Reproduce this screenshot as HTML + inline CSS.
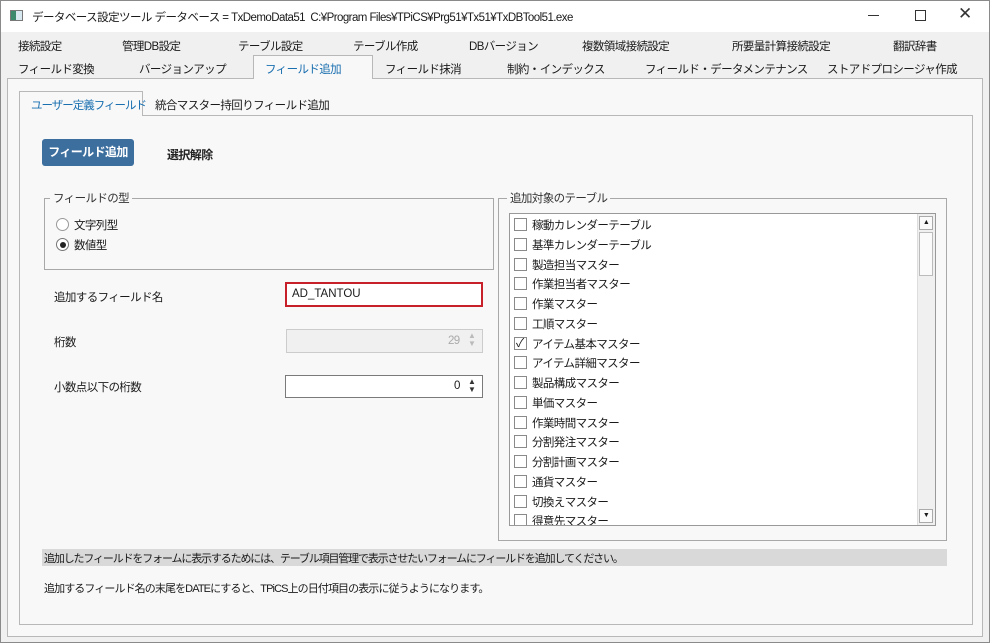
<!DOCTYPE html>
<html><head><meta charset="utf-8"><style>
*{box-sizing:border-box;margin:0;padding:0}
body{width:990px;height:643px;background:#f0f0f0;font-family:"Liberation Sans","Noto Sans CJK JP",sans-serif;font-size:11.5px;letter-spacing:-0.6px;color:#1a1a1a;position:relative;overflow:hidden}
.a{position:absolute;white-space:nowrap}
.win{position:absolute;left:0;top:0;width:990px;height:643px;border:1px solid #8a8a8a;background:#f0f0f0}
.tb{position:absolute;left:1px;top:1px;width:988px;height:31px;background:#fff}
.panel{position:absolute;border:1px solid #b8b8b8;background:#f8f8f8}
.inp{position:absolute;background:#fff;border:1px solid #7a7a7a}
.grp{position:absolute;border:1px solid #a8a8a8}
.leg{position:absolute;background:#f8f8f8;padding:0 3px;color:#333}
.cb{position:absolute;width:13px;height:13px;border:1px solid #8a8a8a;background:#fff}
</style></head><body>
<div class="win"></div>
<div class="tb"></div>
<div class="a" style="left:10px;top:10px;width:13px;height:11px;border:1px solid #777;background:linear-gradient(90deg,#3b8a6e 45%,#d8e8f0 45%)"></div>
<div class="a" style="left:32px;top:9px;font-size:11.5px;letter-spacing:-0.55px">データベース設定ツール データベース = TxDemoData51 &nbsp;C:¥Program Files¥TPiCS¥Prg51¥Tx51¥TxDBTool51.exe</div>
<div class="a" style="left:868px;top:15px;width:11px;height:1px;background:#333"></div>
<div class="a" style="left:915px;top:10px;width:11px;height:11px;border:1px solid #333"></div>
<div class="a" style="left:958px;top:4px;font-size:17px;color:#333">✕</div>

<div class="a" style="left:18px;top:38px">接続設定</div>
<div class="a" style="left:122px;top:38px">管理DB設定</div>
<div class="a" style="left:238px;top:38px">テーブル設定</div>
<div class="a" style="left:353px;top:38px">テーブル作成</div>
<div class="a" style="left:469px;top:38px">DBバージョン</div>
<div class="a" style="left:582px;top:38px">複数領域接続設定</div>
<div class="a" style="left:732px;top:38px">所要量計算接続設定</div>
<div class="a" style="left:893px;top:38px">翻訳辞書</div>

<div class="panel" style="left:7px;top:78px;width:976px;height:559px;background:#f8f8f8"></div>
<div class="a" style="left:253px;top:55px;width:120px;height:24px;background:#f8f8f8;border:1px solid #b8b8b8;border-bottom:none"></div>
<div class="a" style="left:18px;top:61px">フィールド変換</div>
<div class="a" style="left:139px;top:61px">バージョンアップ</div>
<div class="a" style="left:265px;top:61px;color:#1a6fb0">フィールド追加</div>
<div class="a" style="left:385px;top:61px">フィールド抹消</div>
<div class="a" style="left:507px;top:61px">制約・インデックス</div>
<div class="a" style="left:645px;top:61px">フィールド・データメンテナンス</div>
<div class="a" style="left:827px;top:61px">ストアドプロシージャ作成</div>

<div class="panel" style="left:19px;top:115px;width:954px;height:510px"></div>
<div class="a" style="left:19px;top:91px;width:124px;height:25px;background:#f8f8f8;border:1px solid #b8b8b8;border-bottom:none"></div>
<div class="a" style="left:31px;top:97px;color:#1a6fb0;letter-spacing:-1px">ユーザー定義フィールド</div>
<div class="a" style="left:155px;top:97px">統合マスター持回りフィールド追加</div>

<div class="a" style="left:42px;top:139px;width:92px;height:27px;background:#3c6e9e;border-radius:3px;color:#fff;font-weight:bold;font-size:12px;text-align:center;line-height:27px">フィールド追加</div>
<div class="a" style="left:167px;top:146px;font-size:12px;font-weight:bold;color:#222">選択解除</div>

<div class="grp" style="left:44px;top:198px;width:450px;height:72px"></div>
<div class="leg" style="left:50px;top:190px">フィールドの型</div>
<div class="a" style="left:56px;top:218px;width:13px;height:13px;border:1px solid #999;border-radius:50%;background:#fff"></div>
<div class="a" style="left:74px;top:217px">文字列型</div>
<div class="a" style="left:56px;top:238px;width:13px;height:13px;border:1px solid #777;border-radius:50%;background:#fff"></div>
<div class="a" style="left:59.5px;top:241.5px;width:6px;height:6px;border-radius:50%;background:#222"></div>
<div class="a" style="left:74px;top:237px">数値型</div>

<div class="a" style="left:54px;top:289px">追加するフィールド名</div>
<div class="inp" style="left:285px;top:282px;width:198px;height:25px;border:2px solid #c8202a"></div>
<div class="a" style="left:292px;top:288px;letter-spacing:0">AD_TANTOU</div>
<div class="a" style="left:54px;top:334px">桁数</div>
<div class="inp" style="left:286px;top:329px;width:197px;height:24px;background:#f0f0f0;border-color:#ccc"></div>
<div class="a" style="left:448px;top:335px;color:#aaa">29</div>
<div class="a" style="left:468px;top:332px;font-size:8px;color:#bbb;line-height:8px">▲<br>▼</div>
<div class="a" style="left:54px;top:379px">小数点以下の桁数</div>
<div class="inp" style="left:285px;top:375px;width:198px;height:23px"></div>
<div class="a" style="left:454px;top:380px">0</div>
<div class="a" style="left:468px;top:378px;font-size:8px;color:#333;line-height:8px">▲<br>▼</div>

<div class="grp" style="left:498px;top:198px;width:449px;height:343px"></div>
<div class="leg" style="left:507px;top:190px">追加対象のテーブル</div>
<div class="inp" style="left:509px;top:213px;width:427px;height:313px;border-color:#999;overflow:hidden">
<div style="position:absolute;right:0;top:0;width:18px;height:311px;background:#f0f0f0;border-left:1px solid #ddd"></div>
<div style="position:absolute;right:2px;top:2px;width:14px;height:14px;border:1px solid #aaa;background:#fafafa;font-size:7px;text-align:center;line-height:12px">▲</div>
<div style="position:absolute;right:2px;top:18px;width:14px;height:44px;border:1px solid #bbb;background:#fafafa"></div>
<div style="position:absolute;right:2px;bottom:2px;width:14px;height:14px;border:1px solid #aaa;background:#fafafa;font-size:7px;text-align:center;line-height:12px">▼</div>
</div>

<div class="a" style="left:42px;top:549px;width:905px;height:17px;background:#d9d9d9"></div>
<div class="a" style="left:44px;top:550px;font-size:11px;letter-spacing:-1.15px">追加したフィールドをフォームに表示するためには、テーブル項目管理で表示させたいフォームにフィールドを追加してください。</div>
<div class="a" style="left:44px;top:580px;font-size:11px;letter-spacing:-0.9px">追加するフィールド名の末尾をDATEにすると、TPiCS上の日付項目の表示に従うようになります。</div>

<div class="a" style="left:514px;top:218px;width:400px;height:307px;overflow:hidden">
<div style="position:relative">
<div class="cb" style="left:0;top:0"></div><div class="a" style="left:18px;top:-1px">稼動カレンダーテーブル</div>
<div class="cb" style="left:0;top:20px"></div><div class="a" style="left:18px;top:19px">基準カレンダーテーブル</div>
<div class="cb" style="left:0;top:40px"></div><div class="a" style="left:18px;top:39px">製造担当マスター</div>
<div class="cb" style="left:0;top:59px"></div><div class="a" style="left:18px;top:58px">作業担当者マスター</div>
<div class="cb" style="left:0;top:79px"></div><div class="a" style="left:18px;top:78px">作業マスター</div>
<div class="cb" style="left:0;top:99px"></div><div class="a" style="left:18px;top:98px">工順マスター</div>
<div class="cb" style="left:0;top:119px"></div><div class="a" style="left:2px;top:116px;font-size:12px">✓</div><div class="a" style="left:18px;top:118px">アイテム基本マスター</div>
<div class="cb" style="left:0;top:138px"></div><div class="a" style="left:18px;top:137px">アイテム詳細マスター</div>
<div class="cb" style="left:0;top:158px"></div><div class="a" style="left:18px;top:157px">製品構成マスター</div>
<div class="cb" style="left:0;top:178px"></div><div class="a" style="left:18px;top:177px">単価マスター</div>
<div class="cb" style="left:0;top:198px"></div><div class="a" style="left:18px;top:197px">作業時間マスター</div>
<div class="cb" style="left:0;top:217px"></div><div class="a" style="left:18px;top:216px">分割発注マスター</div>
<div class="cb" style="left:0;top:237px"></div><div class="a" style="left:18px;top:236px">分割計画マスター</div>
<div class="cb" style="left:0;top:257px"></div><div class="a" style="left:18px;top:256px">通貨マスター</div>
<div class="cb" style="left:0;top:277px"></div><div class="a" style="left:18px;top:276px">切換えマスター</div>
<div class="cb" style="left:0;top:296px"></div><div class="a" style="left:18px;top:295px">得意先マスター</div>
</div></div>
</body></html>
